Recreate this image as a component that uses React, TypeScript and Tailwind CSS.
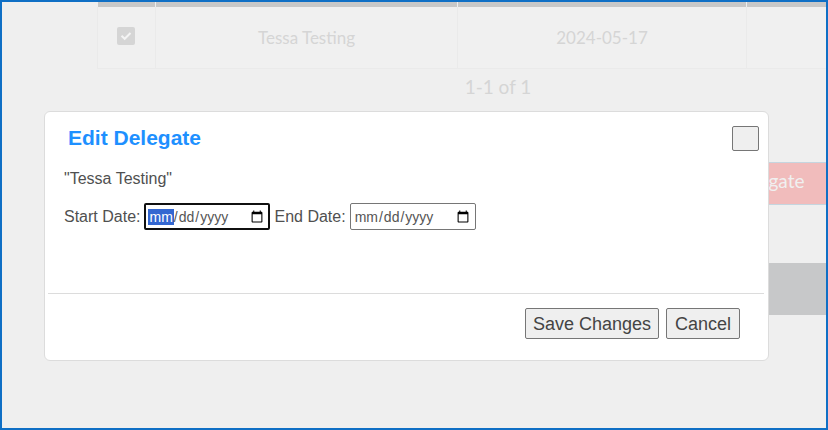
import React, { useState } from 'react';

interface Delegate {
  name: string;
  startDate: string;
}

const delegates: Delegate[] = [{ name: 'Tessa Testing', startDate: '2024-05-17' }];

interface DateFieldProps {
  id: string;
  label: string;
  value: string;
  autoFocus?: boolean;
  onChange: (value: string) => void;
}

const DateField: React.FC<DateFieldProps> = ({ id, label, value, autoFocus, onChange }) => (
  <div className="flex items-center gap-1">
    <label htmlFor={id}>{label}</label>
    <input
      id={id}
      type="date"
      autoFocus={autoFocus}
      value={value}
      onChange={(e) => onChange(e.target.value)}
      className="h-[27px] w-[126px] rounded-xs border border-[#767676] bg-white px-[3px] text-sm text-[#555] outline-none focus:border-2 focus:border-[#101010] focus:px-[2px]"
    />
  </div>
);

const DelegateTable: React.FC = () => {
  const [checked, setChecked] = useState(true);

  return (
    <table className="w-full table-fixed border-collapse text-center text-[17px]">
      <colgroup>
        <col className="w-[58px]" />
        <col className="w-[302px]" />
        <col className="w-[289px]" />
        <col />
      </colgroup>
      <thead>
        <tr className="h-[5px] bg-[#c8c8c8]">
          <th className="border-r border-[#efefef]" />
          <th className="border-r border-[#efefef]" />
          <th className="border-r border-[#efefef]" />
          <th />
        </tr>
      </thead>
      <tbody>
        {delegates.map((d) => (
          <tr key={d.name} className="h-[61px] bg-[#f0f0f0]">
            <td className="border border-t-0 border-[#eaeaea] pr-0.5 pb-0.5">
              <div className="mx-auto grid size-[18px] place-items-center">
                <input
                  type="checkbox"
                  aria-label={d.name}
                  checked={checked}
                  onChange={() => setChecked(!checked)}
                  className="col-start-1 row-start-1 size-[18px] appearance-none rounded-xs bg-[#d5d5d5]"
                />
                {checked && (
                  <svg viewBox="0 0 18 18" className="pointer-events-none col-start-1 row-start-1 size-[18px]" fill="none" stroke="#f4f4f4" strokeWidth="2">
                    <path d="M4.5 8.7 7.7 11.8 13.5 6" />
                  </svg>
                )}
              </div>
            </td>
            <td className="border border-t-0 border-[#eaeaea]">{d.name}</td>
            <td className="border border-t-0 border-[#eaeaea]">{d.startDate}</td>
            <td className="border border-t-0 border-[#eaeaea]" />
          </tr>
        ))}
      </tbody>
    </table>
  );
};

const EditDelegateDialog: React.FC = () => {
  const [start, setStart] = useState('');
  const [end, setEnd] = useState('');

  return (
    <div
      role="dialog"
      aria-labelledby="dialog-title"
      className="absolute top-[109px] right-[57px] left-[42px] rounded-md border border-[#dcdcdc] bg-white pr-1 pl-[3px] font-['Liberation_Sans',Arial,sans-serif] text-base text-[#505050]"
    >
      <div className="flex items-start justify-between pt-3.5 pr-[5px] pl-5">
        <h2 id="dialog-title" className="text-[21px] leading-6 font-bold text-[#1e90ff]">
          Edit Delegate
        </h2>
        <button type="button" aria-label="Close" className="h-[25px] w-[27px] rounded-xs border border-[#767676] bg-[#efefef]" />
      </div>

      <div className="px-4 pt-4 pb-[63px]">
        <p className="leading-6">"{delegates[0].name}"</p>
        <div className="mt-3 flex gap-1">
          <DateField id="start" label="Start Date:" value={start} onChange={setStart} autoFocus />
          <DateField id="end" label="End Date:" value={end} onChange={setEnd} />
        </div>
      </div>

      <div className="flex justify-end gap-[7px] border-t border-[#dcdcdc] pt-3.5 pr-6 pb-[21px] text-lg leading-7 text-[#444]">
        <button type="button" className="h-[31px] rounded-xs border border-[#767676] bg-[#efefef] px-[7px]">
          Save Changes
        </button>
        <button type="button" className="h-[31px] rounded-xs border border-[#767676] bg-[#efefef] px-2">
          Cancel
        </button>
      </div>
    </div>
  );
};

const App: React.FC = () => {
  return (
    <div className="relative min-h-screen overflow-hidden border-2 border-[#0f6fc5] bg-[#efefef] font-[Lato,sans-serif] text-[#d5d5d5]">
      {/* Page behind the dialog */}
      <div className="ml-[95px] w-[802px]">
        <DelegateTable />
        <p className="mt-1 text-center text-[19px] leading-7">1-1 of 1</p>
        <div className="mt-[61px] flex justify-end">
          <button type="button" className="h-[43px] w-[220px] border border-[#c5d5df] bg-[#f1bcbc] pr-11 pb-1 text-[19px] text-[#f0f0f0]">
            Delegate
          </button>
        </div>
        <div className="mt-[58px] h-[52px] bg-[#c7c8c9]" />
      </div>

      <EditDelegateDialog />
    </div>
  );
};

export default App;
